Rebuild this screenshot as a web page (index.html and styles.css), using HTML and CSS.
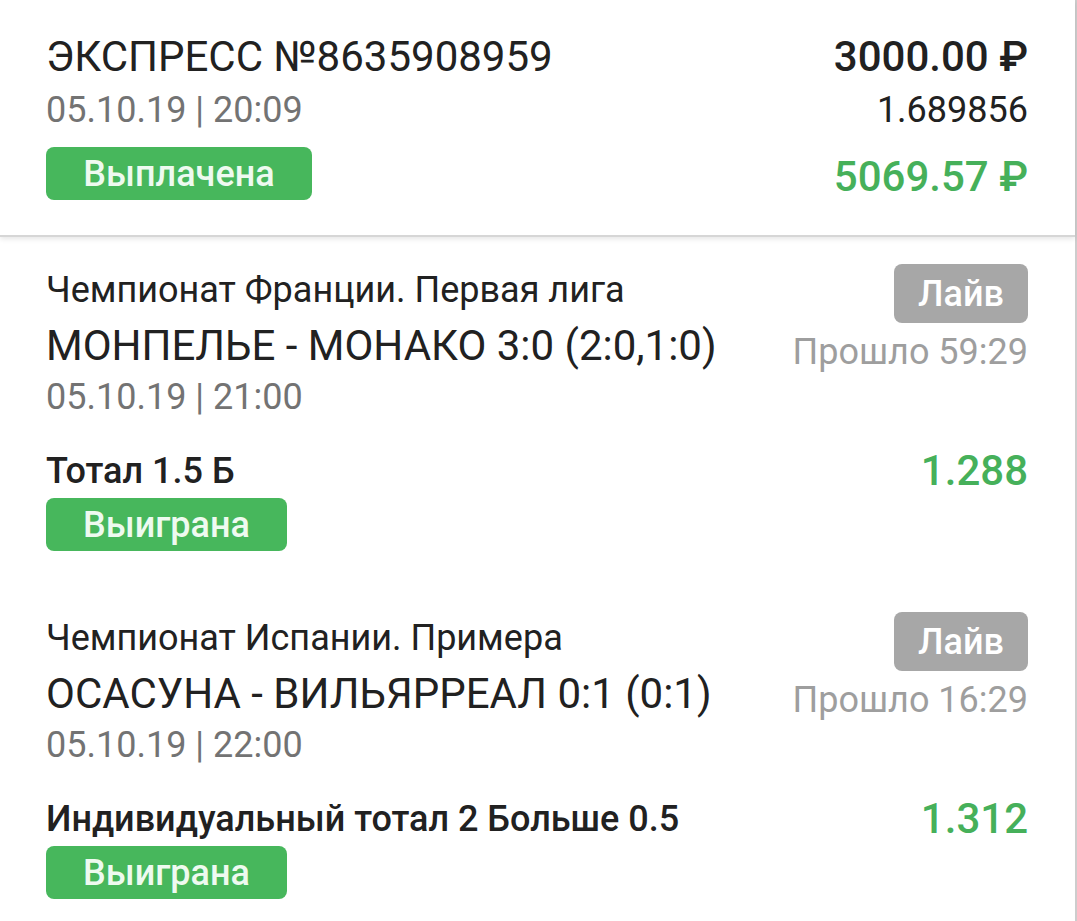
FILE: index.html
```html
<!DOCTYPE html>
<html lang="ru">
<head>
<meta charset="utf-8">
<title>Экспресс</title>
<link rel="stylesheet" href="styles.css">
</head>
<body>
<div class="page">
  <header class="summary">
    <div class="summary-left">
      <div class="title">ЭКСПРЕСС №8635908959</div>
      <div class="date">05.10.19 | 20:09</div>
      <div class="badge badge-green badge-paid">Выплачена</div>
    </div>
    <div class="summary-right">
      <div class="amount">3000.00 ₽</div>
      <div class="coef">1.689856</div>
      <div class="payout">5069.57 ₽</div>
    </div>
  </header>

  <section class="bet">
    <div class="event">
      <div class="event-left">
        <div class="league">Чемпионат Франции. Первая лига</div>
        <div class="match">МОНПЕЛЬЕ - МОНАКО 3:0 (2:0,1:0)</div>
        <div class="date">05.10.19 | 21:00</div>
      </div>
      <div class="event-right">
        <div class="badge badge-gray">Лайв</div>
        <div class="elapsed">Прошло 59:29</div>
      </div>
    </div>
    <div class="outcome">
      <div class="outcome-name">Тотал 1.5 Б</div>
      <div class="odds">1.288</div>
    </div>
    <div class="badge badge-green badge-won">Выиграна</div>
  </section>

  <section class="bet">
    <div class="event">
      <div class="event-left">
        <div class="league">Чемпионат Испании. Примера</div>
        <div class="match">ОСАСУНА - ВИЛЬЯРРЕАЛ 0:1 (0:1)</div>
        <div class="date">05.10.19 | 22:00</div>
      </div>
      <div class="event-right">
        <div class="badge badge-gray">Лайв</div>
        <div class="elapsed">Прошло 16:29</div>
      </div>
    </div>
    <div class="outcome">
      <div class="outcome-name">Индивидуальный тотал 2 Больше 0.5</div>
      <div class="odds">1.312</div>
    </div>
    <div class="badge badge-green badge-won">Выиграна</div>
  </section>
</div>
</body>
</html>
```

FILE: styles.css
```css
* { box-sizing: border-box; }
html, body {
  margin: 0;
  padding: 0;
  background: #ffffff;
}
body {
  font-family: Roboto, "Noto Sans", "Liberation Sans", sans-serif;
  color: #212121;
  overflow: hidden;
}
.page {
  width: 1077px;
  min-height: 921px;
  border-right: 2px solid #cdcdcd;
}
.summary {
  display: flex;
  justify-content: space-between;
  padding: 32px 47px 33px 46px;
  border-bottom: 2px solid #d6d6d6;
  box-shadow: 0 2px 5px rgba(0, 0, 0, 0.10);
  position: relative;
}
.summary-left, .summary-right {
  display: flex;
  flex-direction: column;
}
.summary-left { align-items: flex-start; }
.summary-right { align-items: flex-end; }
.title {
  font-size: 42px;
  line-height: 50px;
  font-weight: 400;
}
.date {
  font-size: 36px;
  line-height: 44px;
  color: #737373;
  margin-top: 6px;
}
.amount {
  font-size: 42px;
  line-height: 50px;
  font-weight: 500;
}
.coef {
  font-size: 36px;
  line-height: 44px;
  margin-top: 6px;
}
.payout {
  font-size: 42px;
  line-height: 50px;
  font-weight: 500;
  color: #46b05a;
  margin-top: 20px;
}
.badge {
  display: inline-flex;
  align-items: center;
  justify-content: center;
  font-size: 36px;
  font-weight: 500;
  border-radius: 8px;
  color: #ffffff;
}
.badge-green {
  background: #47b75c;
  color: #eefaf0;
  height: 53px;
}
.badge-paid {
  width: 266px;
  margin-top: 15px;
}
.badge-won {
  width: 241px;
  margin-top: 2px;
}
.badge-gray {
  background: #a7a7a7;
  width: 134px;
  height: 59px;
}
.bet {
  padding: 27px 47px 34px 46px;
}
.event {
  display: flex;
  justify-content: space-between;
  align-items: flex-start;
}
.event-left {
  display: flex;
  flex-direction: column;
  padding-top: 6px;
}
.event-right {
  display: flex;
  flex-direction: column;
  align-items: flex-end;
}
.league {
  font-size: 36px;
  line-height: 40px;
}
.match {
  font-size: 42px;
  line-height: 50px;
  margin-top: 11px;
}
.event-left .date {
  margin-top: 4px;
}
.elapsed {
  font-size: 36px;
  line-height: 44px;
  color: #9e9e9e;
  margin-top: 7px;
}
.outcome {
  display: flex;
  justify-content: space-between;
  align-items: center;
  margin-top: 27px;
}
.outcome-name {
  font-size: 36px;
  line-height: 44px;
  font-weight: 500;
}
.odds {
  font-size: 42px;
  line-height: 50px;
  font-weight: 500;
  color: #46b05a;
}
```
